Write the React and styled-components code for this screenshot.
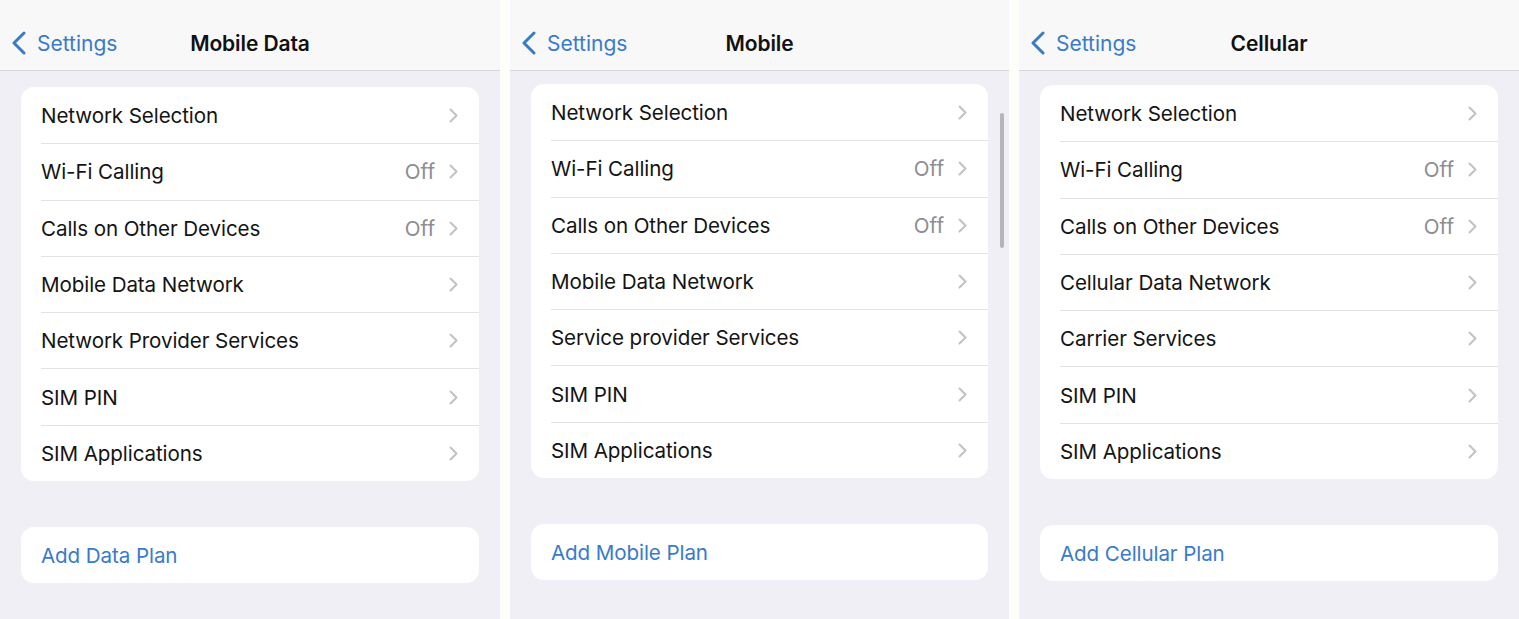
import React from "react";
import styled, { createGlobalStyle } from "styled-components";

const GlobalStyle = createGlobalStyle`
  html, body {
    margin: 0;
    padding: 0;
    background: #ffffff;
  }
  body {
    font-family: Inter, "Noto Sans", "Liberation Sans", sans-serif;
    -webkit-font-smoothing: antialiased;
  }
`;

const Screen = styled.div`
  display: grid;
  grid-template-columns: 500px 499px 500px;
  column-gap: 10px;
  width: 1519px;
  height: 619px;
  overflow: hidden;
  background: #fdfdf9;
`;

const Panel = styled.div`
  position: relative;
  display: flex;
  flex-direction: column;
  background: #f0eff5;
  height: 619px;
  overflow: hidden;
`;

const NavBar = styled.div`
  position: relative;
  display: flex;
  align-items: center;
  justify-content: center;
  height: 71px;
  padding-top: 16px;
  box-sizing: border-box;
  background: #f8f8f9;
  border-bottom: 1px solid #d6d6da;
`;

const Back = styled.div`
  position: absolute;
  left: 11px;
  top: 0;
  bottom: 0;
  display: flex;
  align-items: center;
  gap: 11px;
  padding-top: 16px;
  color: #3a7bc8;
  font-size: 21px;
`;

const Title = styled.div`
  font-size: 21px;
  font-weight: 600;
  color: #111;
  letter-spacing: -0.1px;
`;

const Content = styled.div`
  display: flex;
  flex-direction: column;
  gap: 46px;
  padding: ${(p) => p.$top}px 21px 0 21px;
`;

const Card = styled.div`
  background: #ffffff;
  border-radius: 13px;
  overflow: hidden;
`;

const Row = styled.div`
  display: flex;
  align-items: center;
  height: 56.3px;
  margin-left: 20px;
  padding-right: 21px;
  box-sizing: border-box;
  border-top: ${(p) => (p.$first ? "none" : "1px solid #e3e3e6")};
`;

const Label = styled.div`
  flex: 1;
  font-size: 20.6px;
  color: ${(p) => (p.$link ? "#3a7bc8" : "#141414")};
  letter-spacing: -0.1px;
`;

const Value = styled.div`
  font-size: 20.6px;
  color: #8d8d92;
  margin-right: 14px;
`;

const Scroll = styled.div`
  position: absolute;
  right: 5px;
  top: 113px;
  width: 4px;
  height: 135px;
  border-radius: 2px;
  background: #b4b4b9;
`;

const Chevron = () => (
  <svg width="9" height="15" viewBox="0 0 9 15">
    <polyline
      points="1.5,1.5 7.5,7.5 1.5,13.5"
      fill="none"
      stroke="#c2c2c6"
      strokeWidth="2"
      strokeLinecap="round"
      strokeLinejoin="round"
    />
  </svg>
);

const BackChevron = () => (
  <svg width="15" height="24" viewBox="0 0 15 24">
    <polyline
      points="13,2 3,12 13,22"
      fill="none"
      stroke="#3a7bc8"
      strokeWidth="3"
      strokeLinecap="round"
      strokeLinejoin="round"
    />
  </svg>
);

const panels = [
  {
    title: "Mobile Data",
    top: 16,
    rows: [
      ["Network Selection"],
      ["Wi-Fi Calling", "Off"],
      ["Calls on Other Devices", "Off"],
      ["Mobile Data Network"],
      ["Network Provider Services"],
      ["SIM PIN"],
      ["SIM Applications"],
    ],
    add: "Add Data Plan",
  },
  {
    title: "Mobile",
    top: 13,
    scroll: true,
    rows: [
      ["Network Selection"],
      ["Wi-Fi Calling", "Off"],
      ["Calls on Other Devices", "Off"],
      ["Mobile Data Network"],
      ["Service provider Services"],
      ["SIM PIN"],
      ["SIM Applications"],
    ],
    add: "Add Mobile Plan",
  },
  {
    title: "Cellular",
    top: 14,
    rows: [
      ["Network Selection"],
      ["Wi-Fi Calling", "Off"],
      ["Calls on Other Devices", "Off"],
      ["Cellular Data Network"],
      ["Carrier Services"],
      ["SIM PIN"],
      ["SIM Applications"],
    ],
    add: "Add Cellular Plan",
  },
];

export default function App() {
  return (
    <>
      <GlobalStyle />
      <Screen>
        {panels.map((p) => (
          <Panel key={p.title}>
            <NavBar>
              <Back>
                <BackChevron />
                <span>Settings</span>
              </Back>
              <Title>{p.title}</Title>
            </NavBar>
            <Content $top={p.top}>
              <Card>
                {p.rows.map(([label, value], i) => (
                  <Row key={label} $first={i === 0}>
                    <Label>{label}</Label>
                    {value && <Value>{value}</Value>}
                    <Chevron />
                  </Row>
                ))}
              </Card>
              <Card>
                <Row $first>
                  <Label $link>{p.add}</Label>
                </Row>
              </Card>
            </Content>
            {p.scroll && <Scroll />}
          </Panel>
        ))}
      </Screen>
    </>
  );
}
